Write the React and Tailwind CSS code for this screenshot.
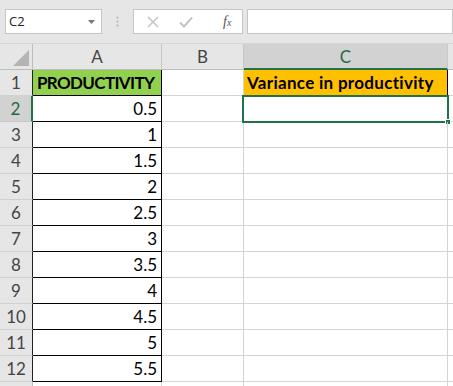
const values = ["0.5", "1", "1.5", "2", "2.5", "3", "3.5", "4", "4.5", "5", "5.5"];

const cols = "grid grid-cols-[33px_129px_82px_204px_1fr]";

function RowHead({ n, active }) {
  return (
    <div
      className={
        "h-[26px] flex items-center justify-center border-b " +
        (active
          ? "bg-[#d2d2d2] text-[#1f6b41] border-b-[#c6c6c6] border-r-2 border-r-[#217346]"
          : "bg-[#e6e6e6] text-[#444] border-b-[#d0d0d0] border-r border-r-[#222]")
      }
    >
      {n}
    </div>
  );
}

export default function App() {
  return (
    <div className="w-[453px] h-[386px] overflow-hidden bg-white font-['Lato',sans-serif] text-[17px] leading-none">
      {/* formula bar */}
      <div className="h-[43px] bg-[#e6e6e6] flex items-start pt-[9px] pl-[5px] font-['Open_Sans',sans-serif]">
        <div className="w-[97px] h-[25px] bg-white border border-[#c6c6c6] flex items-center justify-between pl-[3px] pr-[6px] text-[13px] text-[#222]">
          <span>C2</span>
          <svg width="7" height="4" viewBox="0 0 7 4">
            <path d="M0 0h7L3.5 4z" fill="#777" />
          </svg>
        </div>
        <div className="w-[31px] h-[25px] flex items-center justify-center">
          <svg width="3" height="11" viewBox="0 0 3 11">
            <circle cx="1.5" cy="1.5" r="1" fill="#b0b0b0" />
            <circle cx="1.5" cy="5.5" r="1" fill="#b0b0b0" />
            <circle cx="1.5" cy="9.5" r="1" fill="#b0b0b0" />
          </svg>
        </div>
        <div className="w-[110px] h-[25px] bg-white border border-[#c6c6c6] flex items-center pl-[13px] gap-[20px]">
          <svg width="12" height="12" viewBox="0 0 12 12">
            <path d="M1 1l10 10M11 1L1 11" stroke="#c4c4c4" strokeWidth="1.5" />
          </svg>
          <svg width="14" height="12" viewBox="0 0 14 12">
            <path d="M1 6.5l4 4L13 1.5" stroke="#c4c4c4" strokeWidth="2" fill="none" />
          </svg>
          <span className="ml-[10px] font-['Liberation_Serif',serif] italic text-[14px] text-[#555]">
            f<span className="text-[10px]">x</span>
          </span>
        </div>
        <div className="ml-[4px] flex-1 h-[25px] bg-white border border-[#c6c6c6]" />
      </div>

      {/* column headers */}
      <div className={cols + " h-[27px] border-t border-[#d6d6d6] bg-[#e6e6e6] text-[#444]"}>
        <div className="border-r border-b border-[#bdbdbd] flex items-end justify-end p-[3px]">
          <svg width="16" height="16" viewBox="0 0 16 16">
            <path d="M16 0V16H0z" fill="#b4b4b4" />
          </svg>
        </div>
        <div className="border-r border-b border-r-[#c8c8c8] border-b-[#bdbdbd] flex items-center justify-center">A</div>
        <div className="border-r border-b border-r-[#c8c8c8] border-b-[#bdbdbd] flex items-center justify-center">B</div>
        <div className="bg-[#d2d2d2] border-r border-r-[#c8c8c8] border-b-2 border-b-[#217346] flex items-center justify-center text-[#1f6b41]">
          C
        </div>
        <div className="border-b border-[#bdbdbd]" />
      </div>

      {/* row 1 */}
      <div className={cols}>
        <RowHead n="1" />
        <div className="h-[26px] bg-[#92d050] border-r border-b border-black flex items-center pl-[4px] font-bold text-black tracking-[-0.65px]">
          PRODUCTIVITY
        </div>
        <div className="border-r border-b border-[#d4d4d4]" />
        <div className="bg-[#ffc000] border-r border-b border-black flex items-center pl-[3px] font-bold text-black tracking-[0.3px]">
          Variance in productivity
        </div>
        <div className="border-b border-[#d4d4d4]" />
      </div>

      {values.map((v, i) => (
        <div key={v} className={cols}>
          <RowHead n={String(i + 2)} active={i === 0} />
          <div className="h-[26px] border-r border-b border-black flex items-center justify-end pr-[4px] text-black">
            {v}
          </div>
          <div className="border-r border-b border-[#d4d4d4]" />
          <div className="relative border-r border-b border-[#d4d4d4]">
            {i === 0 && (
              <div className="absolute -left-[2px] -top-[1px] w-[207px] h-[28px] border-2 border-[#217346]">
                <div className="absolute -right-[4px] -bottom-[4px] w-[6px] h-[6px] bg-[#217346] border border-white" />
              </div>
            )}
          </div>
          <div className="border-b border-[#d4d4d4]" />
        </div>
      ))}

      <div className={cols + " h-[10px]"}>
        <div className="bg-[#e6e6e6] border-r border-[#bdbdbd]" />
        <div className="border-r border-[#d4d4d4]" />
        <div className="border-r border-[#d4d4d4]" />
        <div className="border-r border-[#d4d4d4]" />
        <div />
      </div>
    </div>
  );
}
